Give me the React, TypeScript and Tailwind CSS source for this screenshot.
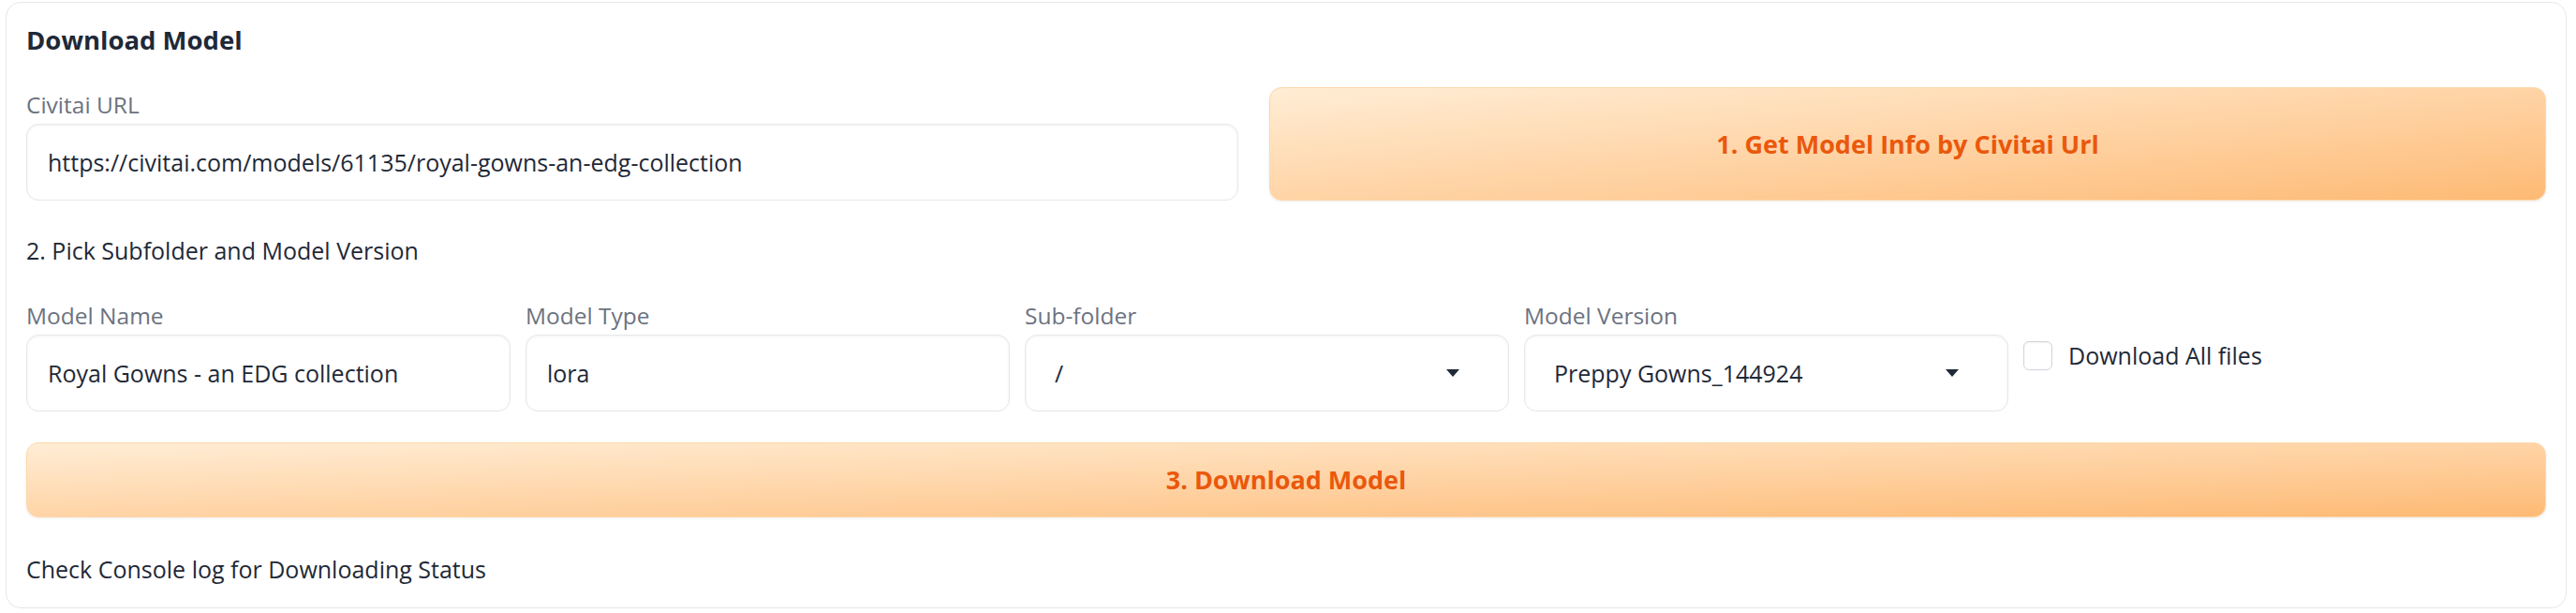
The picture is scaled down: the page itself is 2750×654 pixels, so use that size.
import React from "react";

const font = { fontFamily: '"Open Sans", "Noto Sans", sans-serif' };

function Label({ children }: { children: React.ReactNode }) {
  return (
    <div className="text-[24.5px] leading-[32px] text-[#6b7280] mb-[4px] whitespace-nowrap">
      {children}
    </div>
  );
}

function TextBox({ value }: { value: string }) {
  return (
    <div className="h-[82px] w-full rounded-[13px] border border-[#e5e7eb] bg-white shadow-[inset_0_1px_3px_rgba(0,0,0,0.06)] flex items-center pl-[22px] pr-[16px]">
      <span className="text-[25px] leading-[34px] text-[#1f2937] whitespace-nowrap">{value}</span>
    </div>
  );
}

function SelectBox({ value }: { value: string }) {
  return (
    <div className="h-[82px] w-full rounded-[13px] border border-[#e5e7eb] bg-white shadow-[inset_0_1px_3px_rgba(0,0,0,0.06)] flex items-center pl-[31px] pr-[52px]">
      <span className="flex-1 text-[25px] leading-[34px] text-[#1f2937] whitespace-nowrap">{value}</span>
      <svg width="14" height="8" viewBox="0 0 14 8" className="shrink-0">
        <path d="M0 0 L14 0 L7 8 Z" fill="#1f2937" />
      </svg>
    </div>
  );
}

function Field({ label, children }: { label: string; children: React.ReactNode }) {
  return (
    <div className="w-[517px] shrink-0 flex flex-col">
      <Label>{label}</Label>
      {children}
    </div>
  );
}

function PrimaryButton({ children, className }: { children: React.ReactNode; className?: string }) {
  return (
    <div
      className={
        "rounded-[13px] border border-[#fed7aa] bg-gradient-to-br from-[#ffedd5] to-[#fdba74] shadow-[0_1px_3px_rgba(0,0,0,0.08)] flex items-center justify-center " +
        (className ?? "")
      }
    >
      <span className="text-[27px] leading-[36px] font-bold text-[#ea580c] whitespace-nowrap">{children}</span>
    </div>
  );
}

export default function App() {
  return (
    <div className="min-h-[654px] bg-white pt-[2px] pl-[6px]" style={font}>
      <div className="w-[2734px] h-[647px] rounded-[16px] border border-[#e5e7eb] bg-white px-[21px] pt-[20px] flex flex-col">
        <div className="text-[27.5px] leading-[40px] font-bold text-[#1f2937]">Download Model</div>

        <div className="mt-[30px] flex gap-[33px] items-start">
          <div className="w-[1294px] shrink-0 pt-[3px] flex flex-col">
            <Label>Civitai URL</Label>
            <TextBox value="https://civitai.com/models/61135/royal-gowns-an-edg-collection" />
          </div>
          <PrimaryButton className="flex-1 h-[121px]">1. Get Model Info by Civitai Url</PrimaryButton>
        </div>

        <div className="mt-[36px] text-[25px] leading-[34px] text-[#1f2937]">2. Pick Subfolder and Model Version</div>

        <div className="mt-[37px] flex gap-[16px] items-start">
          <Field label="Model Name">
            <TextBox value="Royal Gowns - an EDG collection" />
          </Field>
          <Field label="Model Type">
            <TextBox value="lora" />
          </Field>
          <Field label="Sub-folder">
            <SelectBox value="/" />
          </Field>
          <Field label="Model Version">
            <SelectBox value="Preppy Gowns_144924" />
          </Field>
          <div className="pt-[41px] flex items-center gap-[17px]">
            <div className="w-[31px] h-[31px] rounded-[6px] border-[1.5px] border-[#d1d5db] bg-white shadow-[inset_0_1px_2px_rgba(0,0,0,0.05)]" />
            <span className="text-[25px] leading-[34px] text-[#1f2937] whitespace-nowrap">Download All files</span>
          </div>
        </div>

        <PrimaryButton className="mt-[33px] h-[80px] w-full">3. Download Model</PrimaryButton>

        <div className="mt-[38px] text-[25px] leading-[34px] text-[#1f2937]">Check Console log for Downloading Status</div>
      </div>
    </div>
  );
}
